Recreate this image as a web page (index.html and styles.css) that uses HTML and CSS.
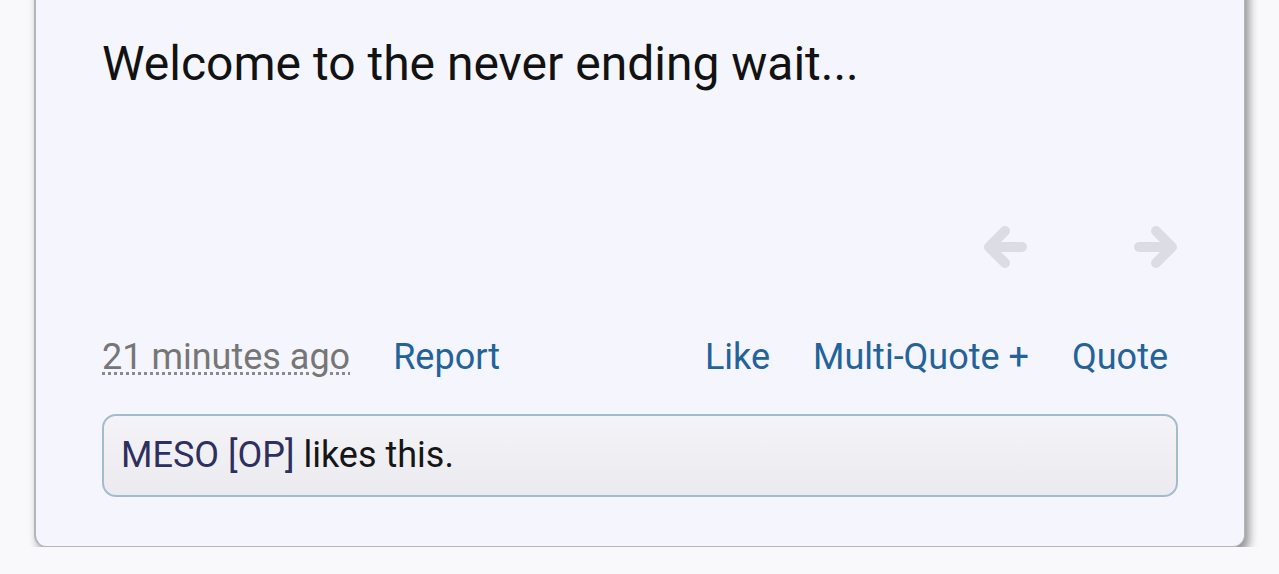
FILE: index.html
```html
<!DOCTYPE html>
<html lang="en">
<head>
  <meta charset="UTF-8">
  <meta name="viewport" content="width=device-width, initial-scale=1.0">
  <title>Post</title>
  <link rel="stylesheet" href="styles.css">
</head>
<body>
  <div class="post">
    <p class="post-text">Welcome to the never ending wait...</p>

    <div class="post-nav">
      <a class="nav-arrow" href="#" aria-label="Previous">
        <svg width="44" height="48" viewBox="0 0 44 48">
          <path d="M39 24H7M22 8L6 24l16 16" fill="none" stroke="#dcdce5" stroke-width="10" stroke-linecap="round" stroke-linejoin="round"/>
        </svg>
      </a>
      <a class="nav-arrow" href="#" aria-label="Next">
        <svg width="44" height="48" viewBox="0 0 44 48">
          <path d="M5 24h32M22 8l16 16-16 16" fill="none" stroke="#dcdce5" stroke-width="10" stroke-linecap="round" stroke-linejoin="round"/>
        </svg>
      </a>
    </div>

    <div class="post-controls">
      <div class="controls-left">
        <abbr class="post-time" title="21 minutes ago">21 minutes ago</abbr>
        <a href="#">Report</a>
      </div>
      <div class="controls-right">
        <a href="#">Like</a>
        <a href="#">Multi-Quote +</a>
        <a href="#">Quote</a>
      </div>
    </div>

    <div class="likes-bar">
      <a href="#" class="liker">MESO [OP]</a> likes this.
    </div>
  </div>
</body>
</html>
```

FILE: styles.css
```css
* {
  margin: 0;
  padding: 0;
  box-sizing: border-box;
  font-family: 'Roboto', 'Noto Sans', sans-serif;
}

body {
  background-color: #f9f9fb;
  overflow: hidden;
}

.post {
  width: 1211px;
  margin: -30px 0 0 34px;
  padding: 64px 66px 49px;
  background-color: #f5f5fe;
  border: 1px solid #b4b4bc;
  border-left-width: 2px;
  border-radius: 0 0 12px 12px;
  box-shadow: 4px 6px 10px rgba(0, 0, 0, 0.42);
}

.post-text {
  font-size: 48px;
  line-height: 1.2;
  color: #121212;
}

.post-nav {
  display: flex;
  justify-content: flex-end;
  gap: 107px;
  margin-top: 130px;
}

.nav-arrow {
  display: block;
  height: 48px;
}

.post-controls {
  display: flex;
  justify-content: space-between;
  align-items: center;
  margin-top: 63px;
  padding-right: 10px;
}

.controls-left,
.controls-right {
  display: flex;
  gap: 43px;
}

.post-controls a,
.post-time {
  font-size: 36px;
  line-height: 1.3;
  text-decoration: none;
}

.post-controls a {
  color: #24629a;
}

.post-time {
  color: #767676;
  text-decoration: underline dotted #8a8a8a;
  text-decoration-thickness: 3px;
  text-underline-offset: 3px;
}

.likes-bar {
  margin-top: 34px;
  padding: 16px 17px;
  border: 2px solid #a3bccb;
  border-radius: 14px;
  background: linear-gradient(#f4f4f8, #ebebef);
  font-size: 36px;
  line-height: 1.3;
  color: #161616;
}

.liker {
  color: #2d2f5e;
  text-decoration: none;
}
```
